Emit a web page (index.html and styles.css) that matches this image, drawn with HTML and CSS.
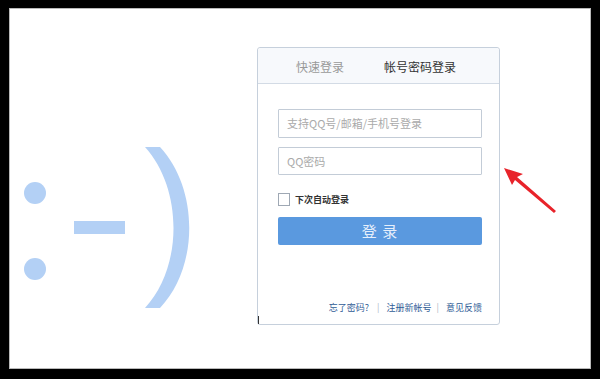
FILE: index.html
```html
<!DOCTYPE html>
<html lang="zh-CN">
<head>
<meta charset="utf-8">
<title>QQ登录</title>
<link rel="stylesheet" href="styles.css">
</head>
<body>
<div class="frame">
  <svg class="smiley" width="247" height="277" viewBox="0 0 247 277">
    <circle cx="25" cy="146" r="11" fill="#b3d0f5"/>
    <circle cx="25" cy="222" r="11" fill="#b3d0f5"/>
    <rect x="64" y="174" width="51" height="13" fill="#b3d0f5"/>
    <path d="M135,100 L150,100 C189,142 189,220 150,261 L135,261 C173,220 173,142 135,100 Z" fill="#b3d0f5"/>
  </svg>
  <div class="card">
    <div class="tabs">
      <div class="tab">快速登录</div>
      <div class="tab active">帐号密码登录</div>
    </div>
    <div class="form">
      <div class="field first">支持QQ号/邮箱/手机号登录</div>
      <div class="field">QQ密码</div>
      <label class="remember"><span class="box"></span><span>下次自动登录</span></label>
      <div class="btn">登 录</div>
      <div class="links">
        <span>忘了密码?</span><span class="sep">|</span><span>注册新帐号</span><span class="sep sep2">|</span><span>意见反馈</span>
      </div>
    </div>
    <span class="caret"></span>
  </div>
  <svg class="arrow" width="70" height="70" viewBox="0 0 70 70">
    <polygon points="14,18 33,24 27,27 66,61 64,63 25,30 22,35" fill="#e8232a"/>
  </svg>
</div>
</body>
</html>
```
FILE: styles.css
```css
html, body {
  margin: 0;
  padding: 0;
  background: #000;
}
body {
  width: 600px;
  height: 379px;
  overflow: hidden;
  font-family: "Noto Sans CJK SC", "Noto Sans", sans-serif;
}
.frame {
  position: relative;
  box-sizing: border-box;
  margin: 8px 9px 0 9px;
  width: 582px;
  height: 361px;
  background: #fff;
  border: 1px solid #b9b9b9;
  display: flex;
  align-items: flex-start;
  padding-top: 38px;
}
.smiley {
  display: block;
  flex: none;
}
.card {
  position: relative;
  box-sizing: border-box;
  width: 243px;
  height: 278px;
  border: 1px solid #c6d0dc;
  border-radius: 3px;
  background: #fff;
  display: flex;
  flex-direction: column;
}
.tabs {
  height: 35px;
  background: #f7f9fc;
  border-bottom: 1px solid #d3dbe5;
  border-radius: 3px 3px 0 0;
  display: flex;
  align-items: center;
  padding-left: 12px;
}
.tab {
  width: 100px;
  text-align: center;
  font-size: 12px;
  color: #999;
  line-height: 16px;
  padding-top: 3px;
}
.tab.active {
  color: #333;
}
.form {
  display: flex;
  flex-direction: column;
  padding: 25px 0 0 20px;
}
.field {
  box-sizing: border-box;
  width: 204px;
  height: 28px;
  border: 1px solid #c3ccd7;
  border-radius: 1px;
  font-size: 11px;
  color: #aaa;
  line-height: 26px;
  padding-left: 8px;
  margin-bottom: 9px;
}
.field.first {
  height: 29px;
  line-height: 27px;
}
.remember {
  display: flex;
  align-items: center;
  margin-top: 9px;
  height: 13px;
  font-size: 9px;
  color: #333;
  font-weight: 600;
}
.box {
  box-sizing: border-box;
  width: 12px;
  height: 13px;
  border: 1px solid #9fa8b4;
  background: #fff;
  margin-right: 5px;
}
.btn {
  margin-top: 11px;
  width: 204px;
  height: 28px;
  background: #5a99df;
  border-radius: 2px;
  color: #e6effb;
  font-size: 15px;
  line-height: 28px;
  text-align: center;
  letter-spacing: 1px;
}
.links {
  margin-top: 57px;
  display: flex;
  justify-content: flex-end;
  width: 204px;
  font-size: 9px;
  color: #2f5c96;
  line-height: 12px;
}
.sep {
  color: #b0b8c4;
  margin: 0 7px 0 8px;
}
.sep.sep2 {
  margin: 0 7px 0 5px;
}
.caret {
  position: absolute;
  left: 0;
  bottom: 0;
  width: 1px;
  height: 8px;
  background: #333;
}
.arrow {
  position: absolute;
  left: 480px;
  top: 141px;
}
```
